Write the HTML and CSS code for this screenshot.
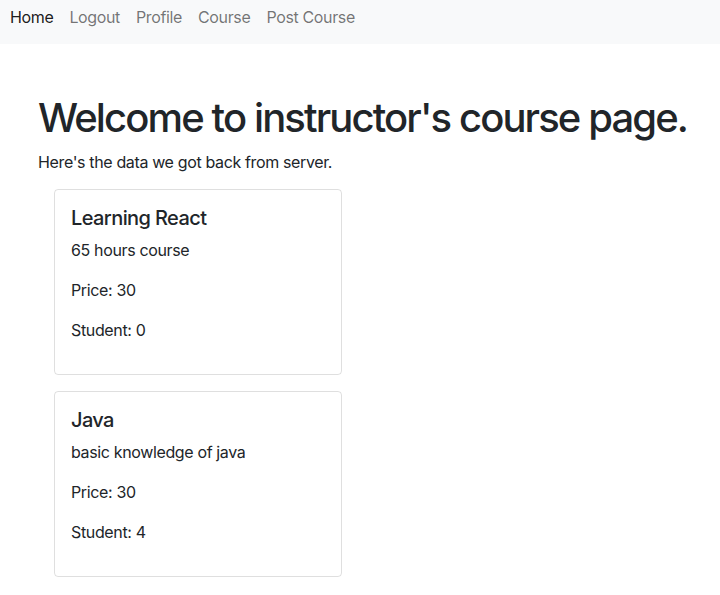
FILE: index.html
```html
<!DOCTYPE html>
<html lang="en">
<head>
<meta charset="utf-8">
<title>Instructor</title>
<link rel="stylesheet" href="styles.css">
</head>
<body>
<nav class="navbar">
  <a class="nav-link active" href="#">Home</a>
  <a class="nav-link" href="#">Logout</a>
  <a class="nav-link" href="#">Profile</a>
  <a class="nav-link" href="#">Course</a>
  <a class="nav-link" href="#">Post Course</a>
</nav>
<main class="page">
  <h1 class="title">Welcome to instructor's course page.</h1>
  <p class="lead-text">Here's the data we got back from server.</p>
  <div class="cards">
    <div class="card">
      <h5 class="card-title">Learning React</h5>
      <p class="card-text">65 hours course</p>
      <p class="card-text">Price: 30</p>
      <p class="card-text">Student: 0</p>
    </div>
    <div class="card">
      <h5 class="card-title">Java</h5>
      <p class="card-text">basic knowledge of java</p>
      <p class="card-text">Price: 30</p>
      <p class="card-text">Student: 4</p>
    </div>
  </div>
</main>
</body>
</html>
```
FILE: styles.css
```css
* { box-sizing: border-box; }
html, body {
  margin: 0;
  padding: 0;
  background: #fff;
  color: #212529;
  font-family: Inter, "Noto Sans", sans-serif;
  font-size: 16px;
  line-height: 1.5;
  letter-spacing: -0.36px;
}
.navbar {
  display: flex;
  align-items: center;
  height: 44px;
  background: #f8f9fa;
  padding: 0 2px;
}
.nav-link {
  display: block;
  padding: 8px 8px;
  color: rgba(0, 0, 0, 0.55);
  text-decoration: none;
  font-size: 16px;
  line-height: 18px;
  margin-top: -10px;
}
.nav-link.active { color: rgba(0, 0, 0, 0.9); }
.page {
  padding: 50px 38px 0;
}
.title {
  margin: 0 0 8px;
  font-size: 40px;
  line-height: 48px;
  font-weight: 500;
  letter-spacing: -1.88px;
  white-space: nowrap;
}
.lead-text {
  margin: 0 0 15px;
}
.cards {
  display: flex;
  flex-direction: column;
  gap: 16px;
  padding-left: 16px;
}
.card {
  width: 288px;
  border: 1px solid rgba(0, 0, 0, 0.125);
  border-radius: 4px;
  padding: 16px;
}
.card-title {
  margin: 0 0 8px;
  font-size: 20px;
  line-height: 24px;
  font-weight: 500;
  letter-spacing: -0.6px;
}
.card-text {
  margin: 0 0 16px;
}
```
